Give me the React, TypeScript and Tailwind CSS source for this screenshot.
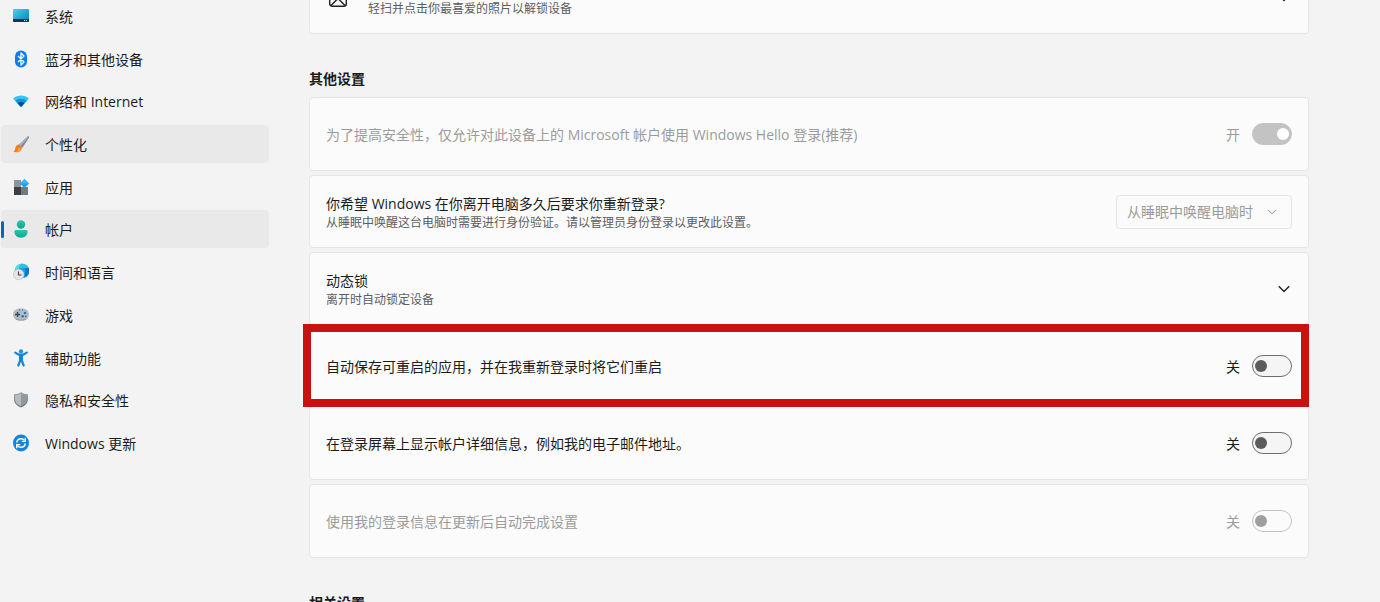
import React from "react";
import { useState } from "react";

type navItem = {
  label: string;
  icon: React.ReactNode;
  filled?: boolean;
  current?: boolean;
};

const SystemIcon = () => (
  <svg viewBox="0 0 16 18" className="h-[18px] w-4 shrink-0" aria-hidden="true">
    <defs>
      <linearGradient id="sys" x1="0" y1="0" x2="1" y2="1">
        <stop offset="0" stopColor="#46d3e8" />
        <stop offset="1" stopColor="#0b7fb4" />
      </linearGradient>
    </defs>
    <rect x="0" y="2" width="16" height="13" rx="1" fill="url(#sys)" />
    <path d="M0 12h16v2a1 1 0 0 1-1 1H1a1 1 0 0 1-1-1z" fill="#0b3a58" />
    <path d="M11 13h1v1h-1zM13 13h1v1h-1z" fill="#d5eef5" />
  </svg>
);

const BluetoothIcon = () => (
  <svg viewBox="0 0 16 18" className="h-[18px] w-4 shrink-0" aria-hidden="true">
    <rect x="2" y="0.5" width="12" height="17" rx="6" fill="#0a7cf5" />
    <path d="M5 6l6 6-3 3V3l3 3-6 6" fill="none" stroke="#fff" strokeWidth="1.3" strokeLinejoin="round" />
  </svg>
);

const WifiIcon = () => (
  <svg viewBox="0 0 16 18" className="h-[18px] w-4 shrink-0" aria-hidden="true">
    <path d="M0 6.5C4.500 2.500 11.500 2.500 16 6.500L8 15z" fill="#33c4f0" />
    <path d="M2.200 8.800C5.500 6 10.500 6 13.800 8.800L8 15z" fill="#1492dc" />
    <path d="M4.500 11.200C6.500 9.600 9.500 9.600 11.500 11.200L8 15z" fill="#0a4c9c" />
  </svg>
);

const BrushIcon = () => (
  <svg viewBox="0 0 16 18" className="h-[18px] w-4 shrink-0" aria-hidden="true">
    <path d="M15.300.8c.9.500.8 1.600.3 2.500L9.200 13 5.700 10z" fill="#7d8995" />
    <path d="M15.300.8L5.700 10l1.600 1.400L15.800 1.800z" fill="#aab5bf" />
    <path d="M5.700 9.500l3 2.800c.3 3-1.700 4.700-4.200 4.900C2.800 17.400 1.300 17 .5 16.200c1.700-.7 1.500-2 2-3.700.4-1.700 1.700-2.800 3.200-3z" fill="#f57c1c" />
    <path d="M5.500 12.500l2 1.700c-.5 1.700-2 2.600-4 2.500 1.300-.9 1.300-2.300 2-4.200z" fill="#fbb03b" />
  </svg>
);

const AppsIcon = () => (
  <svg viewBox="0 0 16 18" className="h-[18px] w-4 shrink-0" aria-hidden="true">
    <rect x="1" y="2" width="7" height="8" fill="#8c949c" />
    <rect x="1" y="9" width="7" height="8" fill="#3c4044" />
    <rect x="8" y="9" width="7" height="8" fill="#74797e" />
    <path d="M11.500 1l4.500 4.500-4.500 4.500L7 5.500z" fill="#1a9ff1" />
    <path d="M11.500 1l4.500 4.500h-9z" fill="#38b8f7" />
  </svg>
);

const AccountIcon = () => (
  <svg viewBox="0 0 16 18" className="h-[18px] w-4 shrink-0" aria-hidden="true">
    <defs>
      <linearGradient id="acc" x1="0" y1="0" x2="0" y2="1">
        <stop offset="0" stopColor="#25cbb0" />
        <stop offset="1" stopColor="#12a48f" />
      </linearGradient>
    </defs>
    <circle cx="8" cy="4.500" r="4.200" fill="url(#acc)" />
    <path d="M3 10h10c1 0 1.600.7 1.600 1.600 0 3.700-2.600 6.100-6.600 6.100s-6.600-2.400-6.600-6.100C1.400 10.700 2 10 3 10z" fill="url(#acc)" />
  </svg>
);

const TimeIcon = () => (
  <svg viewBox="0 0 16 18" className="h-[18px] w-4 shrink-0" aria-hidden="true">
    <circle cx="9" cy="8" r="7.300" fill="#189fdf" />
    <path d="M9 .7A7.300 7.300 0 0 0 1.700 8h4C5.700 5 7 2 9 .7z" fill="#5bd6e6" />
    <path d="M9 .7c3 0 5.500 1.600 6.700 4.300H6.500C7 3 8 1.500 9 .7z" fill="#2fc0e4" />
    <path d="M12 5h3.700c.9 2.500.5 5.500-1.200 7.500L11 14c1.500-3 1.700-6 1-9z" fill="#0d74d4" />
    <circle cx="5.700" cy="11.500" r="5.300" fill="#e4e4e4" stroke="#bdbdbd" strokeWidth=".6" />
    <path d="M5.500 8.500V12h3" fill="none" stroke="#444" strokeWidth="1.100" />
  </svg>
);

const GameIcon = () => (
  <svg viewBox="0 0 16 18" className="h-[18px] w-4 shrink-0" aria-hidden="true">
    <rect x="0" y="2.500" width="16" height="12" rx="6" fill="#b3bcc4" />
    <path d="M2 12.500c3 1.500 9 1.500 12 0-1 1.300-2.500 2-4 2H6c-1.500 0-3-.7-4-2z" fill="#8d979f" />
    <path d="M2 8.500h5M4.500 6v5" stroke="#3e454b" strokeWidth="1.300" />
    <path d="M6 4h1M9 4h1" stroke="#4b545b" />
    <circle cx="12" cy="7" r="1.200" fill="#0e76d0" />
    <circle cx="9.700" cy="10.300" r="1.200" fill="#0e76d0" />
    <circle cx="12.700" cy="10.500" r=".8" fill="#4b545b" />
  </svg>
);

const AccessIcon = () => (
  <svg viewBox="0 0 16 18" className="h-[18px] w-4 shrink-0" aria-hidden="true">
    <circle cx="8" cy="2.400" r="2.100" fill="#1a8fe0" />
    <path
      d="M2.200 3.600L6 5.700h4l3.800-2.100M7.200 7v4.500L5.300 16.500M8.800 7v4.500l1.900 5"
      fill="none"
      stroke="#1585d8"
      strokeWidth="2.200"
      strokeLinecap="round"
      strokeLinejoin="round"
    />
    <path d="M6 5.500h4V12H6z" fill="#1585d8" />
  </svg>
);

const ShieldIcon = () => (
  <svg viewBox="0 0 16 18" className="h-[18px] w-4 shrink-0" aria-hidden="true">
    <defs>
      <linearGradient id="shield" x1="0" y1="0" x2="0" y2="1">
        <stop offset="0" stopColor="#a3a9ae" />
        <stop offset="1" stopColor="#5f656a" />
      </linearGradient>
    </defs>
    <path d="M8 1c2 1.500 4.300 2.200 7 2.300V8c0 4-2.500 6.700-7 8.500C3.500 14.700 1 12 1 8V3.300C3.700 3.200 6 2.500 8 1z" fill="url(#shield)" />
    <path d="M8 2.200C6.200 3.400 4.200 4.100 2 4.300V8c0 3.500 2.100 5.800 6 7.400z" fill="#b5babe" />
    <path d="M8 2.200c1.800 1.200 3.800 1.900 6 2.100V8c0 3.500-2.100 5.800-6 7.400z" fill="#92989d" />
  </svg>
);

const UpdateIcon = () => (
  <svg viewBox="0 0 16 18" className="h-[18px] w-4 shrink-0" aria-hidden="true">
    <ellipse cx="8" cy="9" rx="8" ry="8.500" fill="#0f86dc" />
    <path
      d="M3.700 8.500C4.200 5.900 6 4.700 8 4.700c1.500 0 2.700.6 3.600 1.700M12.300 9.500c-.5 2.600-2.300 3.800-4.300 3.800-1.500 0-2.700-.6-3.600-1.700"
      fill="none"
      stroke="#fff"
      strokeWidth="1.400"
    />
    <path d="M12.300 3.800v3.500H8.800M3.700 14.200v-3.500h3.500" fill="none" stroke="#fff" strokeWidth="1.300" />
  </svg>
);

const PictureIcon = () => (
  <svg viewBox="0 0 20 20" className="h-5 w-5 shrink-0" fill="none" stroke="#222" strokeWidth="1.400" aria-hidden="true">
    <rect x="1.700" y="1.700" width="16.600" height="16.600" rx="2.500" />
    <path d="M3 17.500l5.700-5.800c.8-.7 1.800-.7 2.600 0l5.700 5.800" />
    <circle cx="13" cy="6.500" r="1.500" />
  </svg>
);

const Chevron = () => (
  <svg viewBox="0 0 12 8" className="h-2 w-3 shrink-0" fill="none" stroke="#222" strokeWidth="1.400" aria-hidden="true">
    <path d="M.8 1.200L6 6.500l5.200-5.300" />
  </svg>
);

const navItems: navItem[] = [
  { label: "系统", icon: <SystemIcon /> },
  { label: "蓝牙和其他设备", icon: <BluetoothIcon /> },
  { label: "网络和 Internet", icon: <WifiIcon /> },
  { label: "个性化", icon: <BrushIcon />, filled: true },
  { label: "应用", icon: <AppsIcon /> },
  { label: "帐户", icon: <AccountIcon />, filled: true, current: true },
  { label: "时间和语言", icon: <TimeIcon /> },
  { label: "游戏", icon: <GameIcon /> },
  { label: "辅助功能", icon: <AccessIcon /> },
  { label: "隐私和安全性", icon: <ShieldIcon /> },
  { label: "Windows 更新", icon: <UpdateIcon /> },
];

const card = "rounded border border-[#e5e5e5] bg-[#fbfbfb] px-4 flex items-center";

type toggleRowProps = {
  id: string;
  label: string;
  on?: boolean;
  disabled?: boolean;
  marked?: boolean;
  size: string;
};

const ToggleRow = ({ id, label, on = false, disabled = false, marked = false, size }: toggleRowProps) => {
  const [checked, setChecked] = useState<boolean>(on);

  return (
    <div
      className={`${card} ${size} ${marked ? "relative z-10" : ""} ${
        disabled ? "text-[#9b9b9b]" : "text-[#1b1b1b]"
      }`}
    >
      <label htmlFor={id} className="flex-1 pt-0.5">
        {label}
      </label>
      <span className="mr-3 pt-0.5">{checked ? "开" : "关"}</span>
      <input
        id={id}
        type="checkbox"
        role="switch"
        checked={checked}
        disabled={disabled}
        onChange={(e) => setChecked(e.target.checked)}
        className="flex h-[22px] w-10 appearance-none items-center rounded-full border border-[#6e6e6e] bg-[#f5f5f5] px-0.5 before:h-3 before:w-3 before:rounded-full before:bg-[#5c5c5c] checked:justify-end checked:border-[#005fb8] checked:bg-[#005fb8] checked:before:bg-white disabled:border-[#c3c3c3] disabled:bg-[#fbfbfb] disabled:before:bg-[#9f9f9f] disabled:checked:bg-[#c3c3c3] disabled:checked:before:bg-white"
      />
      {marked && (
        <div className="pointer-events-none absolute -top-[6px] -right-px -bottom-[6px] -left-[7px] border-8 border-[#c81212]" />
      )}
    </div>
  );
};

const Sidebar = () => (
  <nav className="-mt-[3px] ml-px flex h-[465px] w-[268px] shrink-0 flex-col justify-between">
    {navItems.map((item) => (
      <a
        key={item.label}
        href="#"
        aria-current={item.current ? "page" : undefined}
        className={`relative flex h-[38px] items-center gap-4 rounded pl-3 ${item.filled ? "bg-[#e9e9e9]" : ""}`}
      >
        {item.current && <span className="absolute left-0 h-[17px] w-[3px] rounded-full bg-[#0067c0]" />}
        {item.icon}
        <span className="pt-0.5">{item.label}</span>
      </a>
    ))}
  </nav>
);

const App = () => {
  return (
    <div className="flex h-screen gap-10 overflow-hidden bg-[#f3f3f3] font-['Open_Sans','Noto_Sans_CJK_SC',sans-serif] text-sm leading-5 text-[#1b1b1b]">
      <Sidebar />
      <main className="-mt-[38px] mr-[71px] min-w-0 flex-1">
        <button className={`${card} h-[72px] w-full gap-5 text-left`}>
          <span className="pl-0.5">
            <PictureIcon />
          </span>
          <span className="flex-1 pt-0.5">
            <span className="block">图片密码</span>
            <span className="block text-xs leading-[18px] text-[#5d5d5d]">轻扫并点击你最喜爱的照片以解锁设备</span>
          </span>
          <span className="pr-0.5">
            <Chevron />
          </span>
        </button>

        <h2 className="mt-[34px] mb-[7px] leading-[22px] font-bold">其他设置</h2>
        <div className="flex flex-col gap-1">
          <ToggleRow
            id="hello"
            label="为了提高安全性，仅允许对此设备上的 Microsoft 帐户使用 Windows Hello 登录(推荐)"
            on
            disabled
            size="h-[74px]"
          />

          <div className={`${card} h-[73px]`}>
            <label htmlFor="relogin" className="flex-1 pt-0.5">
              <span className="block">你希望 Windows 在你离开电脑多久后要求你重新登录?</span>
              <span className="block text-xs leading-[18px] text-[#5d5d5d]">
                从睡眠中唤醒这台电脑时需要进行身份验证。请以管理员身份登录以更改此设置。
              </span>
            </label>
            <div className="relative flex items-center">
              <select
                id="relogin"
                disabled
                className="h-[34px] w-44 appearance-none rounded border border-[#e5e5e5] bg-[#fbfbfb] pl-2.5 text-[#9b9b9b] opacity-100"
              >
                <option>从睡眠中唤醒电脑时</option>
              </select>
              <svg
                viewBox="0 0 10 6"
                className="pointer-events-none absolute right-[15px] h-1.5 w-2.5"
                fill="none"
                stroke="#8f8f8f"
                aria-hidden="true"
              >
                <path d="M1 .8l4 4 4-4" />
              </svg>
            </div>
          </div>

          <button className={`${card} h-[73px] w-full text-left`}>
            <span className="flex-1 pt-0.5">
              <span className="block">动态锁</span>
              <span className="block text-xs leading-[18px] text-[#5d5d5d]">离开时自动锁定设备</span>
            </span>
            <span className="pr-0.5">
              <Chevron />
            </span>
          </button>

          <ToggleRow id="restart" label="自动保存可重启的应用，并在我重新登录时将它们重启" marked size="h-[73px]" />
          <ToggleRow id="details" label="在登录屏幕上显示帐户详细信息，例如我的电子邮件地址。" size="h-[74px]" />
          <ToggleRow id="finish" label="使用我的登录信息在更新后自动完成设置" disabled size="h-[74px]" />
        </div>

        <h2 className="mt-[34px] leading-[22px] font-bold">相关设置</h2>
      </main>
    </div>
  );
};

export default App;
